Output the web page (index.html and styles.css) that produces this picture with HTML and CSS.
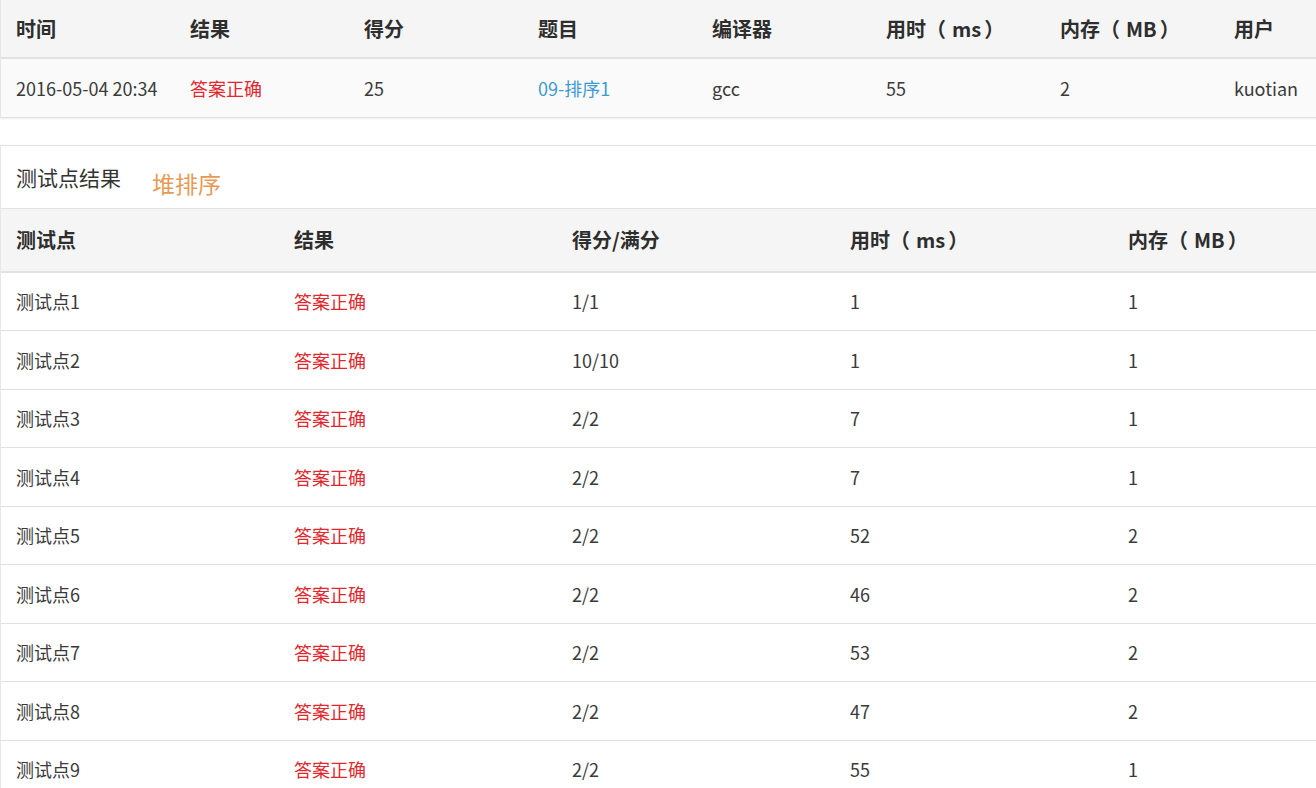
FILE: index.html
```html
<!DOCTYPE html>
<html lang="zh-CN">
<head>
<meta charset="utf-8">
<title>提交结果</title>
<link rel="stylesheet" href="styles.css">
</head>
<body>
<div class="page">
  <section class="panel summary">
    <div class="row head cols8">
      <div class="cell">时间</div>
      <div class="cell">结果</div>
      <div class="cell">得分</div>
      <div class="cell">题目</div>
      <div class="cell">编译器</div>
      <div class="cell">用时（<span class="unit">ms</span>）</div>
      <div class="cell">内存（<span class="unit">MB</span>）</div>
      <div class="cell">用户</div>
    </div>
    <div class="row data cols8 shaded">
      <div class="cell">2016-05-04 20:34</div>
      <div class="cell ok">答案正确</div>
      <div class="cell">25</div>
      <div class="cell"><a class="link" href="#">09-排序1</a></div>
      <div class="cell">gcc</div>
      <div class="cell">55</div>
      <div class="cell">2</div>
      <div class="cell">kuotian</div>
    </div>
  </section>

  <section class="panel cases">
    <div class="title">
      <span class="title-main">测试点结果</span>
      <span class="title-note">堆排序</span>
    </div>
    <div class="row head cols5 case-head">
      <div class="cell">测试点</div>
      <div class="cell">结果</div>
      <div class="cell">得分/满分</div>
      <div class="cell">用时（<span class="unit">ms</span>）</div>
      <div class="cell">内存（<span class="unit">MB</span>）</div>
    </div>
    <div class="row data cols5 case"><div class="cell">测试点1</div><div class="cell ok">答案正确</div><div class="cell">1/1</div><div class="cell">1</div><div class="cell">1</div></div>
    <div class="row data cols5 case"><div class="cell">测试点2</div><div class="cell ok">答案正确</div><div class="cell">10/10</div><div class="cell">1</div><div class="cell">1</div></div>
    <div class="row data cols5 case"><div class="cell">测试点3</div><div class="cell ok">答案正确</div><div class="cell">2/2</div><div class="cell">7</div><div class="cell">1</div></div>
    <div class="row data cols5 case"><div class="cell">测试点4</div><div class="cell ok">答案正确</div><div class="cell">2/2</div><div class="cell">7</div><div class="cell">1</div></div>
    <div class="row data cols5 case"><div class="cell">测试点5</div><div class="cell ok">答案正确</div><div class="cell">2/2</div><div class="cell">52</div><div class="cell">2</div></div>
    <div class="row data cols5 case"><div class="cell">测试点6</div><div class="cell ok">答案正确</div><div class="cell">2/2</div><div class="cell">46</div><div class="cell">2</div></div>
    <div class="row data cols5 case"><div class="cell">测试点7</div><div class="cell ok">答案正确</div><div class="cell">2/2</div><div class="cell">53</div><div class="cell">2</div></div>
    <div class="row data cols5 case"><div class="cell">测试点8</div><div class="cell ok">答案正确</div><div class="cell">2/2</div><div class="cell">47</div><div class="cell">2</div></div>
    <div class="row data cols5 case"><div class="cell">测试点9</div><div class="cell ok">答案正确</div><div class="cell">2/2</div><div class="cell">55</div><div class="cell">1</div></div>
  </section>
</div>
</body>
</html>
```

FILE: styles.css
```css
html, body {
  margin: 0;
  padding: 0;
  background: #ffffff;
  overflow: hidden;
}

body {
  font-family: "Noto Sans CJK SC", "Noto Sans", sans-serif;
  color: #3a3a3a;
  font-size: 18px;
}

.page {
  width: 1392px;
  display: flex;
  flex-direction: column;
  gap: 27px;
}

.panel {
  background: #ffffff;
  border-left: 1px solid #e6e6e6;
  box-shadow: 0 1px 2px rgba(0, 0, 0, 0.08);
}

.row {
  display: grid;
  align-items: center;
}

.cols8 {
  grid-template-columns: repeat(8, 174px);
}

.cols5 {
  grid-template-columns: repeat(5, 278px);
}

.cell {
  padding-left: 15px;
  white-space: nowrap;
}

.head {
  background: #f5f5f5;
  font-weight: bold;
  font-size: 20px;
  color: #2e2e2e;
  height: 57px;
  border-bottom: 2px solid #e2e2e2;
}

.unit {
  padding: 0 3px 0 6px;
}

.data {
  height: 57.5px;
  border-bottom: 1px solid #e0e0e0;
}

.shaded {
  background: #fafafa;
}

.ok {
  color: #e0282e;
}

.link {
  color: #3d9bd2;
  text-decoration: none;
}

.cases {
  border-top: 1px solid #e2e2e2;
}

.title {
  height: 62px;
  display: flex;
  align-items: center;
  gap: 31px;
  padding-left: 15px;
  border-bottom: 1px solid #e2e2e2;
}

.title-main {
  font-size: 21px;
  color: #333333;
  margin-top: 0;
}

.title-note {
  font-size: 23px;
  color: #e69a55;
  margin-top: 12px;
}

.case-head {
  height: 62px;
}
```
